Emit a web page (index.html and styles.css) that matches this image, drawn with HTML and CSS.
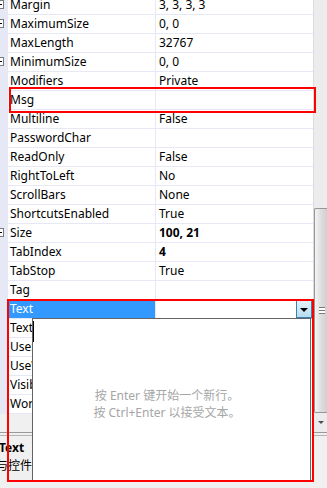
FILE: index.html
```html
<html lang="en">
  <head>
    <meta charset="UTF-8" />
    <title>Property Grid</title>
    <link rel="stylesheet" href="styles.css">
  </head>
  <body>
    <div class="panel">
      <div class="rows">
        <div class="list">
          <div class="row"><span class="gutter"><i class="box"></i></span><span class="name">Margin</span><span class="value">3, 3, 3, 3</span></div>
          <div class="row"><span class="gutter"><i class="box"></i></span><span class="name">MaximumSize</span><span class="value">0, 0</span></div>
          <div class="row"><span class="gutter"></span><span class="name">MaxLength</span><span class="value">32767</span></div>
          <div class="row"><span class="gutter"><i class="box"></i></span><span class="name">MinimumSize</span><span class="value">0, 0</span></div>
          <div class="row"><span class="gutter"></span><span class="name">Modifiers</span><span class="value">Private</span></div>
          <div class="row"><span class="gutter"></span><span class="name">Msg</span><span class="value"></span></div>
          <div class="row"><span class="gutter"></span><span class="name">Multiline</span><span class="value">False</span></div>
          <div class="row"><span class="gutter"></span><span class="name">PasswordChar</span><span class="value"></span></div>
          <div class="row"><span class="gutter"></span><span class="name">ReadOnly</span><span class="value">False</span></div>
          <div class="row"><span class="gutter"></span><span class="name">RightToLeft</span><span class="value">No</span></div>
          <div class="row"><span class="gutter"></span><span class="name">ScrollBars</span><span class="value">None</span></div>
          <div class="row"><span class="gutter"></span><span class="name">ShortcutsEnabled</span><span class="value">True</span></div>
          <div class="row"><span class="gutter"><i class="box"></i></span><span class="name">Size</span><span class="value bold">100, 21</span></div>
          <div class="row"><span class="gutter"></span><span class="name">TabIndex</span><span class="value bold">4</span></div>
          <div class="row"><span class="gutter"></span><span class="name">TabStop</span><span class="value">True</span></div>
          <div class="row"><span class="gutter"></span><span class="name">Tag</span><span class="value"></span></div>
          <div class="row selected"><span class="gutter"></span><span class="name">Text</span><span class="value"><span class="drop"></span></span></div>
          <div class="row"><span class="gutter"></span><span class="name">TextAlign</span><span class="value">Left</span></div>
          <div class="row"><span class="gutter"></span><span class="name">UseSystemPasswordChar</span><span class="value">False</span></div>
          <div class="row"><span class="gutter"></span><span class="name">UseWaitCursor</span><span class="value">False</span></div>
          <div class="row"><span class="gutter"></span><span class="name">Visible</span><span class="value">True</span></div>
          <div class="row"><span class="gutter"></span><span class="name">WordWrap</span><span class="value">True</span></div>
        </div>
      </div>
      <div class="scrollbar">
        <div class="track"></div>
        <div class="thumb"><span class="grip"></span></div>
        <div class="arrow"></div>
      </div>
    </div>
    <div class="desc">
      <div class="desc-title">Text</div>
      <div class="desc-text">与控件关联的文本。</div>
    </div>

    <!-- text editor dropped down from the Text value -->
    <div class="editor">
      <div class="hint">
        <div>按 Enter 键开始一个新行。</div>
        <div>按 Ctrl+Enter 以接受文本。</div>
      </div>
    </div>

    <!-- red annotation boxes -->
    <div class="mark mark-msg"></div>
    <div class="mark mark-text"></div>
  </body>
</html>
```

FILE: styles.css
```css
html,
body {
  margin: 0;
  padding: 0;
}
* {
  box-sizing: border-box;
}
body {
  width: 327px;
  height: 488px;
  overflow: hidden;
  position: relative;
  background: #f0f0f0;
  font-family: "Noto Sans", "Noto Sans CJK SC", sans-serif;
  font-size: 12px;
  color: #000;
}
/* Grid with rows and scrollbar */
.panel {
  display: flex;
  height: 433px;
  border-bottom: 1px solid #9a9a9a;
}
.rows {
  width: 313px;
  overflow: hidden;
}
.list {
  margin-top: -4px;
}
.row {
  display: grid;
  grid-template-columns: 8px 148px 157px;
  height: 19px;
  line-height: 18px;
  border-bottom: 1px solid #e6e9f5;
  background: #fff;
}
.gutter {
  background: #e6e9f5;
  position: relative;
  overflow: hidden;
}
.box {
  position: absolute;
  left: -5px;
  top: 4px;
  width: 9px;
  height: 9px;
  border: 1px solid #7a7a7a;
  background: #fff;
}
.box::before {
  content: "";
  position: absolute;
  left: 1px;
  top: 3px;
  width: 5px;
  height: 1px;
  background: #000;
}
.box::after {
  content: "";
  position: absolute;
  left: 3px;
  top: 1px;
  width: 1px;
  height: 5px;
  background: #000;
}
.name {
  padding-left: 2px;
  border-right: 1px solid #e6e9f5;
  white-space: nowrap;
  overflow: hidden;
}
.value {
  padding-left: 3px;
  white-space: nowrap;
  overflow: hidden;
  display: flex;
  justify-content: space-between;
}
.value.bold {
  font-weight: bold;
}
.row.selected .name {
  background: #3399ff;
  color: #fff;
}
.drop {
  margin-left: auto;
  margin-right: 1px;
  width: 16px;
  height: 18px;
  border: 1px solid #3c7fb1;
  background: linear-gradient(#e5f3fb, #b5dcf3);
  position: relative;
}
.drop::after {
  content: "";
  position: absolute;
  left: 3px;
  top: 7px;
  border-left: 4px solid transparent;
  border-right: 4px solid transparent;
  border-top: 4px solid #000;
}
/* Scrollbar */
.scrollbar {
  width: 14px;
  display: flex;
  flex-direction: column;
  background: #ececec;
  border-left: 1px solid #dcdcdc;
}
.track {
  height: 208px;
}
.thumb {
  height: 205px;
  border: 1px solid #979797;
  border-right: none;
  border-radius: 2px 0 0 2px;
  background: linear-gradient(90deg, #f4f4f4, #dedede 50%, #d0d0d0);
  display: flex;
  align-items: center;
  padding-left: 4px;
}
.grip {
  width: 6px;
  height: 7px;
  border-top: 1px solid #777;
  border-bottom: 1px solid #777;
  background: linear-gradient(#fff 0 2px, #777 2px 3px, #fff 3px);
}
.arrow {
  height: 18px;
  position: relative;
}
.arrow::after {
  content: "";
  position: absolute;
  left: 4px;
  top: 8px;
  border-left: 3px solid transparent;
  border-right: 3px solid transparent;
  border-top: 3px solid #505050;
}
/* Description pane */
.desc {
  margin-top: 2px;
  border-top: 1px solid #b4b4b4;
  padding: 3px 0 0 0;
  line-height: 18px;
}
.desc-title {
  font-weight: bold;
  margin-left: -1px;
}
.desc-text {
  margin-left: -4px;
}
/* Dropdown text editor */
.editor {
  position: absolute;
  left: 32px;
  top: 318px;
  width: 281px;
  height: 163px;
  background: #fff;
  border-top: 1px solid #646464;
  border-left: 1px solid #646464;
  border-right: 3px double #6a6a6a;
  display: flex;
  align-items: center;
  justify-content: center;
  padding: 0 9px 8px 0;
}
.editor::before {
  content: "";
  position: absolute;
  left: 0;
  top: 2px;
  width: 1px;
  height: 21px;
  background: #000;
}
.hint {
  color: #a6a6a6;
  text-align: center;
  line-height: 17px;
  margin-top: 16px;
}
/* Annotations */
.mark {
  position: absolute;
  border: 2px solid #ff0000;
}
.mark-msg {
  left: 9px;
  top: 87px;
  width: 307px;
  height: 26px;
}
.mark-text {
  left: 7px;
  top: 299px;
  width: 307px;
  height: 183px;
}
```
